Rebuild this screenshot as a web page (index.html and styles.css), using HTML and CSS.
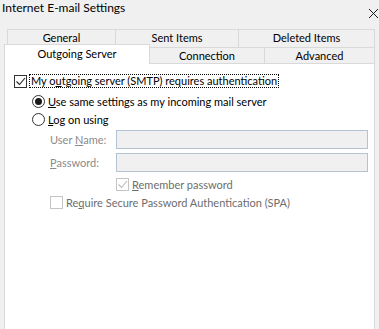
FILE: index.html
```html
<!DOCTYPE html>
<html>
<head>
  <title>Internet E-mail Settings</title>
  <link rel="stylesheet" href="styles.css">
</head>
<body>
  <div id="titlebar">
    <div id="title">Internet E-mail Settings</div>
    <svg id="close" width="9" height="9" viewBox="0 0 9 9">
      <path d="M0 0 L9 9 M9 0 L0 9" stroke="#1a1a1a" stroke-width="1" fill="none"/>
    </svg>
  </div>
  <div id="tabs">
    <div class="tab-row back-row">
      <div class="tab tab-general">General</div>
      <div class="tab tab-sent">Sent Items</div>
      <div class="tab tab-deleted">Deleted Items</div>
    </div>
    <div class="tab-row front-row">
      <div class="tab tab-outgoing selected">Outgoing Server</div>
      <div class="tab tab-connection">Connection</div>
      <div class="tab tab-advanced">Advanced</div>
    </div>
  </div>
  <div id="panel">
    <div class="option auth-row">
      <span class="checkbox checked">
        <svg width="11" height="11" viewBox="0 0 11 11"><path d="M1.5 5.5 L4.5 8.5 L10 2" stroke="#222" stroke-width="1.1" fill="none"/></svg>
      </span>
      <span class="focus-label">My o<u>u</u>tgoing server (SMTP) requires authentication</span>
    </div>
    <div class="option radio-row first-radio">
      <span class="radio on"><span class="dot"></span></span>
      <span class="text"><u>U</u>se same settings as my incoming mail server</span>
    </div>
    <div class="option radio-row second-radio">
      <span class="radio"></span>
      <span class="text"><u>L</u>og on using</span>
    </div>
    <div class="field-row first-field">
      <span class="field-label">User <u>N</u>ame:</span>
      <span class="field-input"></span>
    </div>
    <div class="field-row second-field">
      <span class="field-label"><u>P</u>assword:</span>
      <span class="field-input"></span>
    </div>
    <div class="option disabled remember-row">
      <span class="checkbox">
        <svg width="11" height="11" viewBox="0 0 11 11"><path d="M1.5 5.5 L4.5 8.5 L10 2" stroke="#bcbcbc" stroke-width="1.1" fill="none"/></svg>
      </span>
      <span class="text"><u>R</u>emember password</span>
    </div>
    <div class="option disabled spa-row">
      <span class="checkbox"></span>
      <span class="text">Re<u>q</u>uire Secure Password Authentication (SPA)</span>
    </div>
  </div>
</body>
</html>
```

FILE: styles.css
```css
html, body {
  height: 100%;
  margin: 0;
}
body {
  background-color: #f0f0f0;
  font-family: Lato, "Noto Sans", sans-serif;
  font-size: 11px;
  color: #000;
  display: flex;
  flex-direction: column;
  overflow: hidden;
}
#titlebar {
  height: 29px;
  display: flex;
  justify-content: space-between;
  align-items: flex-start;
}
#title {
  padding: 1px 0 0 2px;
  font-size: 12px;
  line-height: 14px;
}
#close {
  margin: 9px 1px 0 0;
}
.tab-row {
  display: flex;
}
.tab {
  box-sizing: border-box;
  text-align: center;
  white-space: nowrap;
  background-color: #f0f0f0;
  border-top: 1px solid #d9d9d9;
  border-left: 1px solid #d9d9d9;
  line-height: 16px;
}
.back-row {
  margin-left: 7px;
  height: 18px;
}
.back-row .tab {
  height: 18px;
  line-height: 16px;
}
.tab-general {
  width: 108px;
}
.tab-sent {
  width: 123px;
}
.tab-deleted {
  width: 137px;
  border-right: 1px solid #d9d9d9;
}
.front-row {
  margin-left: 4px;
  height: 17px;
  align-items: flex-end;
}
.front-row .tab {
  height: 17px;
}
.tab-outgoing {
  width: 146px;
}
.tab-connection {
  width: 114px;
  border-left: none;
}
.tab-advanced {
  width: 111px;
  border-right: 1px solid #d9d9d9;
}
.front-row .tab.selected {
  position: relative;
  z-index: 1;
  height: 20px;
  margin-top: -3px;
  border-right: 1px solid #d9d9d9;
  background-color: #fff;
  line-height: 18px;
}
#panel {
  flex: 1;
  margin: -1px 4px 0 4px;
  border: 1px solid #d9d9d9;
  border-bottom: none;
  background-color: #fff;
  padding-top: 10px;
}
.option {
  display: flex;
  align-items: center;
  height: 14px;
  gap: 3px;
  white-space: nowrap;
}
.checkbox {
  box-sizing: border-box;
  width: 13px;
  height: 13px;
  border: 1px solid #333;
  background-color: #fff;
  display: flex;
  align-items: center;
  justify-content: center;
}
.auth-row {
  margin-left: 9px;
  gap: 2px;
}
.focus-label {
  border: 1px dotted #000;
  padding: 0 1px;
  line-height: 12px;
}
.radio {
  box-sizing: border-box;
  width: 13px;
  height: 13px;
  border: 1px solid #333;
  border-radius: 50%;
  background-color: #fff;
  display: flex;
  align-items: center;
  justify-content: center;
}
.radio .dot {
  width: 7px;
  height: 7px;
  border-radius: 50%;
  background-color: #1a1a1a;
}
.radio-row {
  margin-left: 27px;
}
.first-radio {
  margin-top: 6px;
}
.second-radio {
  margin-top: 4px;
}
.field-row {
  display: flex;
  align-items: center;
  height: 19px;
  margin-left: 45px;
}
.first-field {
  margin-top: 4px;
}
.second-field {
  margin-top: 4px;
}
.field-label {
  width: 66px;
  white-space: nowrap;
  color: #8a8a8a;
}
.field-input {
  box-sizing: border-box;
  width: 252px;
  height: 19px;
  border: 1px solid #b4c3d3;
  background-color: #f0f0f0;
}
.disabled .checkbox {
  border-color: #c4c4c4;
}
.disabled .text {
  color: #6d6d6d;
}
.remember-row {
  margin: 5px 0 0 111px;
}
.spa-row {
  margin: 4px 0 0 45px;
}
```
